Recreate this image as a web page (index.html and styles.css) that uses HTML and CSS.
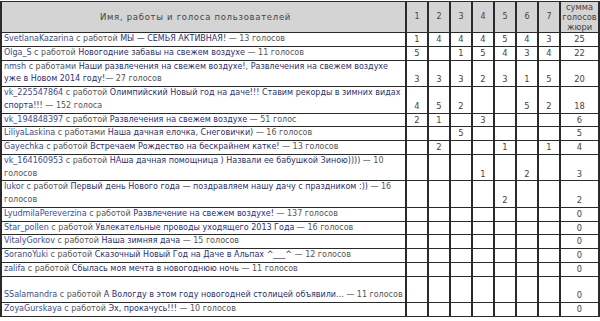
FILE: index.html
```html
<!DOCTYPE html>
<html lang="ru">
<head>
<meta charset="utf-8">
<title>Голоса</title>
<link rel="stylesheet" href="styles.css">
</head>
<body>
<table class="votes">
  <colgroup>
    <col class="c-name"><col class="c-n"><col class="c-n"><col class="c-n"><col class="c-n"><col class="c-n"><col class="c-n"><col class="c-n"><col class="c-sum">
  </colgroup>
  <thead>
    <tr>
      <th class="h-name">Имя, работы и голоса пользователей</th>
      <th>1</th><th>2</th><th>3</th><th>4</th><th>5</th><th>6</th><th>7</th>
      <th class="h-sum">сумма<br>голосов<br>жюри</th>
    </tr>
  </thead>
  <tbody>
    <tr><td class="name"><span class="u">SvetlanaKazarina</span> с работой <span class="w">МЫ — СЕМЬЯ АКТИВНАЯ!</span> — 13 голосов</td><td>1</td><td>4</td><td>4</td><td>4</td><td>5</td><td>4</td><td>3</td><td>25</td></tr>
    <tr><td class="name"><span class="u">Olga_S</span> с работой <span class="w">Новогодние забавы на свежем воздухе</span> — 11 голосов</td><td>5</td><td></td><td>1</td><td>5</td><td>4</td><td>3</td><td>4</td><td>22</td></tr>
    <tr><td class="name"><span class="u">nmsh</span> с работами <span class="w">Наши развлечения на свежем воздухе!</span>, <span class="w">Развлечения на свежем воздухе<br>уже в Новом 2014 году!</span>— 27 голосов</td><td>3</td><td>3</td><td>3</td><td>2</td><td>3</td><td>1</td><td>5</td><td>20</td></tr>
    <tr><td class="name"><span class="u">vk_225547864</span> с работой <span class="w">Олимпийский Новый год на даче!!! Ставим рекорды в зимних видах<br>спорта!!!</span> — 152 голоса</td><td>4</td><td>5</td><td>2</td><td></td><td></td><td>5</td><td>2</td><td>18</td></tr>
    <tr><td class="name"><span class="u">vk_194848397</span> с работой <span class="w">Развлечения на свежем воздухе</span> — 51 голос</td><td>2</td><td>1</td><td></td><td>3</td><td></td><td></td><td></td><td>6</td></tr>
    <tr><td class="name"><span class="u">LiliyaLaskina</span> с работами <span class="w">Наша дачная елочка</span>, <span class="w">Снеговички)</span> — 16 голосов</td><td></td><td></td><td>5</td><td></td><td></td><td></td><td></td><td>5</td></tr>
    <tr><td class="name"><span class="u">Gayechka</span> с работой <span class="w">Встречаем Рождество на бескрайнем катке!</span> — 13 голосов</td><td></td><td>2</td><td></td><td></td><td>1</td><td></td><td>1</td><td>4</td></tr>
    <tr><td class="name"><span class="u">vk_164160953</span> с работой <span class="w">НАша дачная помощница ) Назвали ее бабушкой Зиною))))</span> — 10<br>голосов</td><td></td><td></td><td></td><td>1</td><td></td><td>2</td><td></td><td>3</td></tr>
    <tr><td class="name"><span class="u">Iukor</span> с работой <span class="w">Первый день Нового года — поздравляем нашу дачу с праздником :))</span> — 16<br>голосов</td><td></td><td></td><td></td><td></td><td>2</td><td></td><td></td><td>2</td></tr>
    <tr><td class="name"><span class="u">LyudmilaPereverzina</span> с работой <span class="w">Развлечение на свежем воздухе!</span> — 137 голосов</td><td></td><td></td><td></td><td></td><td></td><td></td><td></td><td>0</td></tr>
    <tr><td class="name"><span class="u">Star_pollen</span> с работой <span class="w">Увлекательные проводы уходящего 2013 Года</span> — 16 голосов</td><td></td><td></td><td></td><td></td><td></td><td></td><td></td><td>0</td></tr>
    <tr><td class="name"><span class="u">VitalyGorkov</span> с работой <span class="w">Наша зимняя дача</span> — 15 голосов</td><td></td><td></td><td></td><td></td><td></td><td></td><td></td><td>0</td></tr>
    <tr><td class="name"><span class="u">SoranoYuki</span> с работой <span class="w">Сказочный Новый Год на Даче в Альпах ^___^</span> — 12 голосов</td><td></td><td></td><td></td><td></td><td></td><td></td><td></td><td>0</td></tr>
    <tr><td class="name"><span class="u">zalifa</span> с работой <span class="w">Сбылась моя мечта в новогоднюю ночь</span> — 11 голосов</td><td></td><td></td><td></td><td></td><td></td><td></td><td></td><td>0</td></tr>
    <tr><td class="name"><br><span class="u">SSalamandra</span> с работой <span class="w">А Вологду в этом году новогодней столицей объявили...</span> — 11 голосов</td><td></td><td></td><td></td><td></td><td></td><td></td><td></td><td>0</td></tr>
    <tr><td class="name"><span class="u">ZoyaGurskaya</span> с работой <span class="w">Эх, прокачусь!!!</span> — 10 голосов</td><td></td><td></td><td></td><td></td><td></td><td></td><td></td><td>0</td></tr>
  </tbody>
</table>
</body>
</html>
```

FILE: styles.css
```css
html, body {
  margin: 0;
  padding: 0;
  background: #ffffff;
}

body {
  padding-top: 1px;
  font-family: "DejaVu Sans", Verdana, sans-serif;
  font-size: 8px;
  color: #555555;
}

.votes {
  width: 597px;
  border-collapse: collapse;
  table-layout: fixed;
}

.c-name { width: 405px; }
.c-n { width: 22px; }
.c-sum { width: 39px; }

.votes th,
.votes td {
  border-top: 1px solid #2a2a2a;
  border-bottom: 1px solid #2a2a2a;
  border-left: 2px solid #2a2a2a;
  border-right: 2px solid #2a2a2a;
  padding: 0 2px;
  line-height: 12.75px;
  white-space: nowrap;
}

.votes th {
  background: #d4d4d4;
  color: #444444;
  font-weight: normal;
  height: 29px;
  vertical-align: middle;
  text-align: center;
  padding: 0;
}

.votes .h-name {
  font-size: 8.5px;
  letter-spacing: 0.7px;
  padding-right: 16px;
}

.votes .h-sum {
  line-height: 10px;
  font-size: 8.3px;
}

.votes td {
  text-align: center;
  vertical-align: bottom;
  color: #444444;
  font-size: 8.3px;
}

.votes td.name {
  text-align: left;
  padding-left: 2px;
  color: #555555;
  font-size: 8px;
}

.u {
  color: #3a4d8f;
}

.w {
  color: #2b2f72;
}
```
